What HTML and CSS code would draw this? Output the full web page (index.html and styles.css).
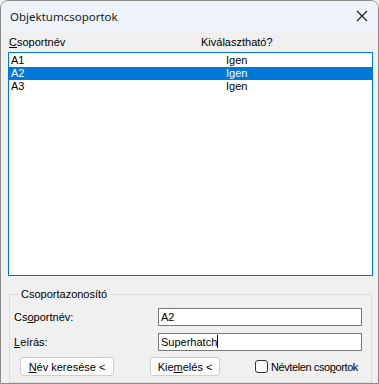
FILE: index.html
```html
<!doctype html>
<html lang="hu">
<head>
    <meta charset="UTF-8">
    <title>Objektumcsoportok</title>
    <link rel="stylesheet" href="styles.css">
</head>
<body>
    <div class="window">
        <div class="titlebar">
            <span class="title">Objektumcsoportok</span>
            <span class="close">
                <svg width="12" height="12" viewBox="0 0 12 12"><path d="M1 1L11 11M11 1L1 11" stroke="#1a1a1a" stroke-width="1.1"/></svg>
            </span>
        </div>
        <div class="content">
            <div class="cols">
                <span class="col-name"><u>C</u>soportnév</span>
                <span class="col-sel">Kiválasztható?</span>
            </div>
            <div class="list">
                <div class="row"><span class="col-name">A1</span><span class="col-sel">Igen</span></div>
                <div class="row selected"><span class="col-name">A2</span><span class="col-sel">Igen</span></div>
                <div class="row"><span class="col-name">A3</span><span class="col-sel">Igen</span></div>
            </div>
            <fieldset class="group">
                <legend>Csoportazonosító</legend>
                <div class="field">
                    <label>Cs<u>o</u>portnév:</label>
                    <div class="input">A2</div>
                </div>
                <div class="field">
                    <label><u>L</u>eírás:</label>
                    <div class="input">Superhatch<span class="caret"></span></div>
                </div>
                <div class="actions">
                    <button class="btn btn-name"><u>N</u>év keresése &lt;</button>
                    <button class="btn btn-hl">Kie<u>m</u>elés &lt;</button>
                    <div class="check"><span class="box"></span><span class="check-text">Névtelen cso<u>p</u>ortok</span></div>
                </div>
            </fieldset>
        </div>
    </div>
</body>
</html>
```
FILE: styles.css
```css
*{
    margin:0;
    padding:0;
    box-sizing:border-box;
}
body{
    background:#f0f0f0;
    font-family:"Liberation Sans", Arial, sans-serif;
    font-size:11px;
    color:#000;
}
u{
    text-decoration:underline;
    text-underline-offset:1px;
}
.window{
    width:379px;
    height:384px;
    border:1px solid #8c8c8c;
    border-radius:8px 8px 0 0;
    background:#f0f0f0;
    overflow:hidden;
}
.titlebar{
    height:30px;
    background:#eef3f9;
    display:flex;
    align-items:center;
    justify-content:space-between;
    padding:0 10px 0 9px;
}
.title{
    font-family:"Noto Sans", sans-serif;
    font-size:11.5px;
    color:#1a1a1a;
}
.close{
    display:flex;
    width:12px;
    height:12px;
}
.content{
    padding:0 5px 0 7px;
}
.cols{
    height:21px;
    display:flex;
    align-items:center;
    padding-left:1px;
    padding-top:1px;
}
.col-name{
    width:192px;
}
.list{
    height:224px;
    background:#fff;
    border:1px solid #0078d7;
    padding-top:1px;
}
.row{
    height:13px;
    line-height:13px;
    display:flex;
    padding-left:2px;
}
.row .col-name{
    width:215px;
}
.row.selected{
    background:#0078d7;
    color:#fff;
}
.group{
    margin:12px 1px 0 1px;
    height:95px;
    border:1px solid #dcdcdc;
    padding:0 9px 0 4px;
}
.group legend{
    margin-left:5px;
    padding:0 3px 0 2px;
    font-size:11px;
}
.field{
    display:flex;
    align-items:center;
    height:25px;
}
.field:first-of-type{
    margin-top:4px;
}
.field label{
    width:144px;
}
.input{
    width:204px;
    height:18px;
    border:1px solid #7a7a7a;
    background:#fff;
    line-height:16px;
    padding-left:2px;
    font-size:11px;
}
.caret{
    display:inline-block;
    width:1px;
    height:13px;
    background:#000;
    vertical-align:-2px;
}
.actions{
    display:flex;
    align-items:center;
    margin-top:3px;
    padding-left:6px;
}
.btn{
    height:19px;
    border:1px solid #cfcfcf;
    border-radius:3px;
    background:#fdfdfd;
    font-family:"Liberation Sans", Arial, sans-serif;
    font-size:11px;
    color:#000;
}
.btn-name{
    width:94px;
}
.btn-hl{
    width:70px;
    margin-left:36px;
}
.check{
    display:flex;
    align-items:center;
    margin-left:35px;
    white-space:nowrap;
}
.check .box{
    flex:none;
    width:13px;
    height:13px;
    border:1px solid #333;
    border-radius:3px;
    background:#fff;
    margin-right:3px;
}
.check-text{
    letter-spacing:-0.4px;
}
```
